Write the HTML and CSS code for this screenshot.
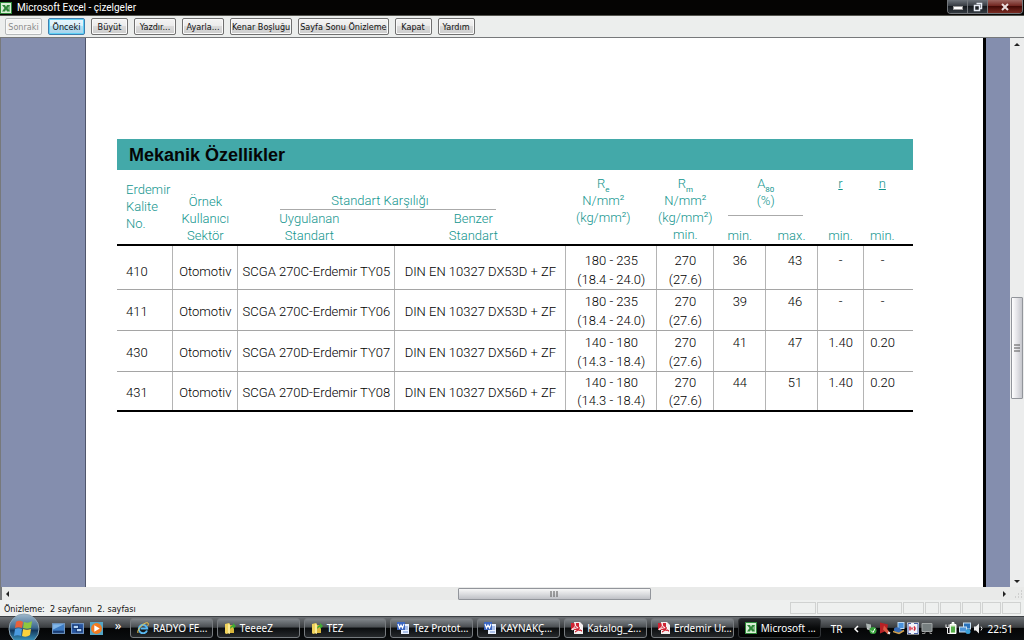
FILE: index.html
```html
<!DOCTYPE html>
<html lang="tr">
<head>
<meta charset="utf-8">
<title>Microsoft Excel - çizelgeler</title>
<link rel="stylesheet" href="styles.css">
</head>
<body>
<svg class="defs" aria-hidden="true">
  <defs>
    <linearGradient id="orb" x1="0" y1="0" x2="0" y2="1"><stop offset="0" stop-color="#9fb9cc"/><stop offset=".45" stop-color="#3f6a8f"/><stop offset=".55" stop-color="#12375d"/><stop offset="1" stop-color="#48b4dc"/></linearGradient>
    <symbol id="excel" viewBox="0 0 12 12"><rect width="12" height="12" fill="#2f8a3a"/><rect x="1" y="1" width="10" height="10" fill="#d9efd6"/><path d="M2 3h3l1 2 1-2h3L7.500 6 10 9.500H7L6 7.500 5 9.500H2L4.500 6z" fill="#2c8636"/><path d="M8 4h2M8 6h2M8 8h2" stroke="#2c8636"/></symbol>
    <symbol id="folder" viewBox="0 0 12 12"><path d="M1 2l4-1 1 1v9l-4 1-1-1z" fill="#f1d35c"/><path d="M4 3h6v8H5z" fill="#d9b63b"/><path d="M4 2l2 1v9l-2-1z" fill="#fbeb98"/><path d="M6 7c0-3 2-4 3-4V1l3 3-3 3V5c-1 0-2 1-3 2z" fill="#3faa35"/></symbol>
    <symbol id="word" viewBox="0 0 12 12"><path d="M4 2h8v10H4z" fill="#eaf1ff"/><path d="M8 5h3M8 7h3M6 10h5" stroke="#6c8ed0"/><rect width="8" height="8" fill="#3b66c0"/><path d="M1 2l1.500 4L4 3l1.500 3L7 2" fill="none" stroke="#fff" stroke-width="1.200"/></symbol>
    <symbol id="pdf" viewBox="0 0 12 12"><path d="M3 0h6l3 3v9H3z" fill="#f4eeee"/><path d="M0 1h8v7H0z" fill="#cf2333"/><path d="M1 7c3-1 4-4 3-6 0 3 2 5 6 5-3-1-6 0-9 2z" fill="none" stroke="#fff"/><path d="M4 10c2-1 4-3 4-5 0 2 1 3 3 4-2-1-5-1-7 1z" fill="none" stroke="#cf2333"/></symbol>
    <symbol id="ie" viewBox="0 0 12 12"><path d="M10 8.500A4.200 4.200 0 1 1 10.200 6.500H3.500" fill="none" stroke="#58b7f0" stroke-width="2"/><path d="M1 11C-1 8 8-1 11 1c1 1 0 2-.5 3" fill="none" stroke="#f1c545"/></symbol>
  </defs>
</svg>

<header class="titlebar">
  <svg class="app-icon"><use href="#excel"/></svg>
  <h1 class="window-title">Microsoft Excel - çizelgeler</h1>
  <div class="window-controls">
    <button class="control" aria-label="Simge durumuna küçült"><svg viewBox="0 0 12 10"><rect x="1.500" y="4.500" width="9" height="3" fill="#fff" stroke="#999"/></svg></button>
    <button class="control" aria-label="Aşağı geri getir"><svg viewBox="0 0 12 10"><path d="M4.500 1.500h5v5H8M2.500 3.500h5v5h-5z" fill="none" stroke="#e8edf5" stroke-width="1.500"/></svg></button>
    <button class="control control-close" aria-label="Pencereyi kapat"><svg viewBox="0 0 12 10"><path d="M3 2l6 6M9 2L3 8" stroke="#e9dede" stroke-width="2"/></svg></button>
  </div>
</header>

<nav class="toolbar">
  <button class="tool" disabled>Sonraki</button>
  <button class="tool tool-active">Önceki</button>
  <button class="tool">Büyüt</button>
  <button class="tool tool-wide">Yazdır...</button>
  <button class="tool tool-wide">Ayarla...</button>
  <button class="tool">Kenar Boşluğu</button>
  <button class="tool">Sayfa Sonu Önizleme</button>
  <button class="tool">Kapat</button>
  <button class="tool">Yardım</button>
</nav>

<div class="workspace">
  <main class="preview">
    <section class="sheet">
      <h2 class="banner">Mekanik Özellikler</h2>
      <table class="props">
        <colgroup>
          <col class="c-grade"><col class="c-sector"><col class="c-applied"><col class="c-similar"><col class="c-yield"><col class="c-tensile"><col class="c-elong"><col class="c-elong"><col class="c-r"><col class="c-n">
        </colgroup>
        <thead>
          <tr class="head-main">
            <th rowspan="3" class="h-grade">Erdemir<br>Kalite<br>No.</th>
            <th rowspan="3" class="h-low">Örnek<br>Kullanıcı<br>Sektör</th>
            <th colspan="2" class="h-low h-std"><span class="std-rule">Standart Karşılığı</span></th>
            <th rowspan="3" class="h-top h-yield">R<sub>e</sub><br>N/mm<sup>2</sup><br>(kg/mm<sup>2</sup>)</th>
            <th rowspan="3" class="h-top">R<sub>m</sub><br>N/mm<sup>2</sup><br>(kg/mm<sup>2</sup>)<br>min.</th>
            <th colspan="2" rowspan="2" class="h-top"><span class="elong-rule">A<sub>80</sub><br>(%)</span></th>
            <th rowspan="2" class="h-top"><u>r</u></th>
            <th rowspan="2" class="h-top h-n"><u>n</u></th>
          </tr>
          <tr class="head-line">
            <th rowspan="2" class="h-low h-pair">Uygulanan<br>Standart</th>
            <th rowspan="2" class="h-low h-pair">Benzer<br>Standart</th>
          </tr>
          <tr class="head-line">
            <th class="h-low">min.</th>
            <th class="h-low">max.</th>
            <th class="h-low">min.</th>
            <th class="h-low h-n">min.</th>
          </tr>
        </thead>
        <tbody>
          <tr><td class="grade">410</td><td>Otomotiv</td><td>SCGA 270C-Erdemir TY05</td><td>DIN EN 10327 DX53D + ZF</td><td>180 - 235<br>(18.4 - 24.0)</td><td>270<br>(27.6)</td><td class="top">36</td><td class="top max">43</td><td class="top">-</td><td class="top h-n">-</td></tr>
          <tr><td class="grade">411</td><td>Otomotiv</td><td>SCGA 270C-Erdemir TY06</td><td>DIN EN 10327 DX53D + ZF</td><td>180 - 235<br>(18.4 - 24.0)</td><td>270<br>(27.6)</td><td class="top">39</td><td class="top max">46</td><td class="top">-</td><td class="top h-n">-</td></tr>
          <tr><td class="grade">430</td><td>Otomotiv</td><td>SCGA 270D-Erdemir TY07</td><td>DIN EN 10327 DX56D + ZF</td><td>140 - 180<br>(14.3 - 18.4)</td><td>270<br>(27.6)</td><td class="top">41</td><td class="top max">47</td><td class="top">1.40</td><td class="top h-n">0.20</td></tr>
          <tr><td class="grade">431</td><td>Otomotiv</td><td>SCGA 270D-Erdemir TY08</td><td>DIN EN 10327 DX56D + ZF</td><td>140 - 180<br>(14.3 - 18.4)</td><td>270<br>(27.6)</td><td class="top">44</td><td class="top max">51</td><td class="top">1.40</td><td class="top h-n">0.20</td></tr>
        </tbody>
      </table>
    </section>
  </main>
  <div class="vscroll">
    <svg class="arrow" viewBox="0 0 12 12"><path d="M3 8l3-3 3 3z" fill="#222"/></svg>
    <div class="vtrack-before"></div>
    <div class="vthumb"><svg viewBox="0 0 6 8"><path d="M0 1h6M0 4h6M0 7h6" stroke="#555"/></svg></div>
    <div class="vtrack-after"></div>
    <svg class="arrow" viewBox="0 0 12 12"><path d="M3 5l3 3 3-3z" fill="#222"/></svg>
  </div>
</div>

<div class="hscroll">
  <svg class="arrow" viewBox="0 0 12 12"><path d="M7 3L4 6l3 3z" fill="#222"/></svg>
  <div class="htrack-before"></div>
  <div class="hthumb"><svg viewBox="0 0 8 6"><path d="M1 0v6M4 0v6M7 0v6" stroke="#555"/></svg></div>
  <div class="htrack-after"></div>
  <svg class="arrow" viewBox="0 0 12 12"><path d="M5 3l3 3-3 3z" fill="#222"/></svg>
  <svg class="grip" viewBox="0 0 12 12"><path d="M10 3h1M7 6h1M10 6h1M4 9h1M7 9h1M10 9h1" stroke="#b5b5b5"/></svg>
</div>

<div class="statusbar">
  <p class="status-text">Önizleme:&nbsp; 2 sayfanın&nbsp; 2. sayfası</p>
  <div class="panes"><span class="pane w27"></span><span class="pane w85"></span><span class="pane w22"></span><span class="pane w15"></span><span class="pane w22"></span><span class="pane w20"></span><span class="pane w20"></span><span class="pane w20"></span></div>
</div>

<footer class="taskbar">
  <button class="start" aria-label="Başlat"><svg viewBox="0 0 32 32"><circle cx="16" cy="16" r="15" fill="url(#orb)" stroke="#8fa6b5"/><path d="M8 9c3-2 5-1 7 0l-1 6c-2-1-5-1-7 0z" fill="#e8613b"/><path d="M16 9c3 1 5 1 8-1l-1 7c-3 1-5 1-8 0z" fill="#8fc73e"/><path d="M7 16c2-1 5-1 7 0l-1 7c-2-1-5-1-7 0z" fill="#4a9be0"/><path d="M15 16c3 1 5 1 8 0l-1 6c-3 2-5 2-8 1z" fill="#fbd23c"/></svg></button>
  <div class="quick">
    <button class="launch" aria-label="Masaüstünü göster"><svg viewBox="0 0 12 12"><rect x=".5" y="1.500" width="11" height="9" fill="#3d7cc4" stroke="#6f94bd"/><path d="M1 8h10v2H1z" fill="#193a70"/><path d="M1 2h10L1 7z" fill="#83b7e8"/></svg></button>
    <button class="launch" aria-label="Pencereler arasında geçiş yap"><svg viewBox="0 0 12 12"><rect x=".5" y="1.500" width="11" height="9" fill="#26539d" stroke="#7599c7"/><path d="M2 3h5v3H2zM5 6h5v3H5z" fill="#bad7f5" stroke="#173973"/></svg></button>
    <button class="launch" aria-label="Media Player"><svg viewBox="0 0 12 12"><rect width="12" height="12" fill="#53a5c6"/><circle cx="6" cy="6" r="5" fill="#f17b21"/><path d="M4 3l5 3-5 3z" fill="#fff"/></svg></button>
  </div>
  <span class="more">»</span>
  <div class="tasks">
    <button class="task"><svg><use href="#ie"/></svg>RADYO FE...</button>
    <button class="task"><svg><use href="#folder"/></svg>TeeeeZ</button>
    <button class="task"><svg><use href="#folder"/></svg>TEZ</button>
    <button class="task"><svg><use href="#word"/></svg>Tez Protot...</button>
    <button class="task"><svg><use href="#word"/></svg>KAYNAKÇ...</button>
    <button class="task"><svg><use href="#pdf"/></svg>Katalog_2...</button>
    <button class="task"><svg><use href="#pdf"/></svg>Erdemir Ur...</button>
    <button class="task task-active"><svg><use href="#excel"/></svg>Microsoft ...</button>
  </div>
  <div class="tray">
    <span class="lang">TR</span>
    <svg class="chevron" viewBox="0 0 6 10"><path d="M5 2L2 5l3 3" fill="none" stroke="#fff" stroke-width="1.500"/></svg>
    <svg viewBox="0 0 12 12"><path d="M1 1l5 1v4L2 7z" fill="#adb6b4"/><path d="M2 6l4 2" stroke="#ddd"/><circle cx="8" cy="8" r="3.500" fill="#36a43b"/><path d="M6 8l2 2 2-4" fill="none" stroke="#fff"/></svg>
    <svg viewBox="0 0 12 12"><path d="M1 0l8 2-1 6-7 3z" fill="#b82025"/><path d="M5 3l6 7-2 2-5-5z" fill="#d95a43"/><path d="M9 10l2 1" stroke="#eee" stroke-width="2"/></svg>
    <svg viewBox="0 0 12 12"><rect x="5" y="0" width="6" height="6" fill="#4b92dd" stroke="#bdd9f2"/><path d="M1 6c3-3 6 0 9 2l-3 3c-3 0-5-1-6-3z" fill="#386bb3"/><path d="M0 9l6 2 5-3" fill="none" stroke="#d3a14b" stroke-width="1.500"/></svg>
    <svg viewBox="0 0 12 12"><rect width="12" height="12" fill="#f1f3fb"/><path d="M4 1H1v10h3M7 1h4v10H7" fill="none" stroke="#4761a7"/><path d="M3 4v4M5 5v2M7 4q2 2 0 4" fill="none" stroke="#d52a3b" stroke-width="1.500"/></svg>
    <svg viewBox="0 0 12 12"><path d="M1 1h10v8H1z" fill="#777f80" stroke="#a2a7a7"/><path d="M4 9v2H1M9 9v2h2" fill="none" stroke="#888"/></svg>
    <svg class="apart" viewBox="0 0 12 12"><path d="M5 2h6v9H5zM7 0h2v2H7z" fill="#dff0d5" stroke="#fff"/><rect x="6" y="4" width="4" height="6" fill="#54ad47"/><path d="M1 2v3h3V2M2.500 5v6H5" fill="none" stroke="#eee"/></svg>
    <svg viewBox="0 0 12 12"><rect x="4.500" y=".5" width="7" height="6" fill="#2871bb" stroke="#c9e0f2"/><rect x=".5" y="4.500" width="7" height="5" fill="#4e94d8" stroke="#c9e0f2"/><circle cx="9" cy="9" r="2.500" fill="#3aa0d8"/></svg>
    <svg viewBox="0 0 12 12"><path d="M1 4h2l3-3v10L3 8H1z" fill="#eee"/><path d="M8 4q2 2 0 4" fill="none" stroke="#ddd"/></svg>
    <time class="clock">22:51</time>
  </div>
</footer>
</body>
</html>
```

FILE: styles.css
```css
* { box-sizing: border-box; }
body {
  margin: 0;
  min-height: 100vh;
  display: flex;
  flex-direction: column;
  background: #eceeec;
  font-family: "DejaVu Sans Condensed", "DejaVu Sans", sans-serif;
  font-size: 9px;
  color: #111;
}
button { font: inherit; color: inherit; padding: 0; }
svg { display: block; flex: none; }
.defs { position: absolute; width: 0; height: 0; }

.titlebar {
  display: flex;
  align-items: center;
  gap: 5px;
  height: 16px;
  background: #050403;
  border-bottom: 1px solid #55554f;
}
.app-icon { width: 12px; height: 12px; }
.window-title {
  margin: 0;
  flex: 1;
  font: 400 10px/14px Roboto, "Noto Sans", sans-serif;
  color: #fff;
}
.window-controls {
  display: flex;
  align-self: flex-start;
  height: 14px;
  margin-right: 1px;
  border: 1px solid #74787c;
  border-top: 0;
  border-radius: 0 0 4px 4px;
  overflow: hidden;
}
.control {
  width: 20px;
  display: flex;
  align-items: center;
  justify-content: center;
  border: 0;
  border-right: 1px solid #74787c;
  background: linear-gradient(#6c7279, #30353b 50%, #14181c 50%, #343b42);
}
.control svg { width: 12px; height: 10px; }
.control-close {
  width: 34px;
  border-right: 0;
  background: linear-gradient(#9c6560, #6d1e18 50%, #430a06 50%, #7b2b22);
}

.toolbar {
  display: flex;
  flex-wrap: wrap;
  gap: 6px;
  padding: 2px 5px;
  background: #eceeed;
  border-bottom: 1px solid #77797b;
}
.tool {
  height: 17px;
  min-width: 37px;
  padding: 0 1px;
  border: 1px solid #707070;
  border-radius: 2px;
  background: linear-gradient(#f4f4f4, #ebebeb 50%, #dadada 50%, #cdcdcd);
  box-shadow: inset 0 0 0 1px #fafafa;
}
.tool-wide { min-width: 42px; }
.tool:disabled { color: #8b8b8b; border-color: #b5b9ba; background: #f2f3f2; }
.tool-active {
  border-color: #3c7fb1;
  background: linear-gradient(#e8f5fc, #d7effa 50%, #b9def1 50%, #a5d3ec);
  box-shadow: inset 0 0 0 1px #5fd0f5;
}

.workspace { flex: 1; display: flex; }
.preview {
  flex: 1;
  display: flex;
  padding: 0 24px 0 84px;
  border-left: 1px solid #77797b;
  background: #848eae;
}
.sheet {
  flex: 1;
  padding: 101px 70px 32px 31px;
  background: #fff;
  border-left: 1px solid #50566c;
  border-right: 3px solid #000;
}
.banner {
  margin: 0;
  padding: 1px 12px 0;
  background: #43a9a9;
  color: #050505;
  font: bold 18px/30px "Liberation Sans", Arial, sans-serif;
}
.props {
  width: 100%;
  table-layout: fixed;
  border-collapse: collapse;
  font: 300 13px/19px Roboto, "Liberation Sans", sans-serif;
  color: #000;
  text-align: center;
  white-space: nowrap;
  border-bottom: 2px solid #000;
}
.c-grade { width: 7%; }
.c-sector { width: 8.2%; }
.c-applied { width: 19.7%; }
.c-similar { width: 21.5%; }
.c-yield { width: 11.4%; }
.c-tensile { width: 7.2%; }
.c-elong { width: 6.5%; }
.c-r { width: 5.8%; }
.c-n { width: 6.2%; }
.props th {
  padding: 0;
  font-weight: 300;
  line-height: 17px;
  color: #12958e;
}
.props thead { border-bottom: 2px solid #000; }
.head-main { height: 40px; }
.head-line { height: 17px; }
.props .h-grade { padding: 11px 0 0 9px; text-align: left; vertical-align: top; }
.props .h-low { vertical-align: bottom; }
.props .h-top { padding-top: 5px; vertical-align: top; }
.props .h-yield { padding-right: 16px; }
.props .h-pair { padding-right: 14px; }
.props .h-n { padding-right: 12px; }
.props .h-std { padding-right: 28px; }
.std-rule {
  display: block;
  width: 72%;
  margin: 0 auto;
  padding-right: 16px;
  border-bottom: 1px solid #aaa;
}
.elong-rule {
  display: block;
  width: 72%;
  margin: 0 auto;
  padding-bottom: 6px;
  border-bottom: 1px solid #aaa;
}
.props sub, .props sup { font-size: 8px; font-weight: 400; line-height: 0; }
.props td {
  padding: 2px 0 0;
  border: 1px solid #b4b4b4;
  border-bottom-color: #a5a5a5;
}
.props td:first-child { border-left: 0; }
.props td:last-child { border-right: 0; }
.props tbody td:nth-child(-n+4) { padding-top: 3px; }
.props tbody tr:first-child td { padding-top: 5px; border-top: 0; }
.props tbody tr:first-child td:nth-child(-n+4) { padding-top: 8px; }
.props tbody tr:last-child td { line-height: 18px; border-bottom: 0; }
.props .grade { padding-left: 9px; text-align: left; }
.props .top { vertical-align: top; }
.props .max { padding-left: 7px; }

.arrow { width: 12px; height: 12px; }
.vscroll {
  width: 14px;
  display: flex;
  flex-direction: column;
  align-items: center;
  background: #eceded;
}
.vtrack-before { flex: 248; }
.vthumb {
  flex: 100;
  width: 12px;
  display: flex;
  align-items: center;
  justify-content: center;
  border: 1px solid #92959b;
  border-radius: 1px;
  background: linear-gradient(90deg, #fff, #e4e4e8 50%, #c5c6cc);
}
.vthumb svg { width: 6px; height: 8px; }
.vtrack-after { flex: 177; }

.hscroll {
  display: flex;
  align-items: center;
  height: 13px;
  border-left: 2px solid #77797b;
  background: #e9eae9;
}
.htrack-before { flex: 445; }
.hthumb {
  flex: 191;
  height: 12px;
  display: flex;
  align-items: center;
  justify-content: center;
  border: 1px solid #92959b;
  border-radius: 1px;
  background: linear-gradient(#f7f7f7, #dcdde0 50%, #bfc1c6);
}
.hthumb svg { width: 8px; height: 6px; }
.htrack-after { flex: 348; }
.grip { width: 14px; height: 12px; }

.statusbar {
  display: flex;
  align-items: center;
  justify-content: space-between;
  height: 16px;
  padding: 0 2px 0 4px;
  background: #eef0ef;
}
.status-text { margin: 0; padding-top: 2px; }
.panes { display: flex; align-self: stretch; padding: 2px 0; }
.pane { border: 1px solid #d0d2d1; margin-right: 1px; }
.w27 { width: 26px; }
.w85 { width: 85px; }
.w22 { width: 21px; }
.w15 { width: 14px; }
.w20 { width: 19px; }

.taskbar {
  display: flex;
  align-items: center;
  height: 24px;
  padding: 0 11px 0 8px;
  border-top: 1px solid #3c4044;
  background: linear-gradient(#6d7175, #3a3d40 45%, #040506 50%, #0b0d0f);
  color: #fff;
  font: 10px/14px "Noto Sans", sans-serif;
}
.start { width: 32px; height: 32px; border: 0; background: none; margin: -4px 0; z-index: 1; }
.start svg { width: 32px; height: 32px; }
.quick { display: flex; gap: 6px; margin-left: 12px; }
.launch { border: 0; background: none; }
.launch svg { width: 13px; height: 13px; }
.more { width: 27px; padding: 0 0 8px 3px; text-align: center; font-size: 13px; }
.tasks { flex: 1; display: flex; gap: 4px; align-self: stretch; padding: 1px 0 2px; }
.task {
  flex: 1;
  min-width: 0;
  display: flex;
  align-items: center;
  gap: 4px;
  padding: 0 6px;
  overflow: hidden;
  white-space: nowrap;
  border: 1px solid #777b7f;
  border-radius: 3px;
  background: linear-gradient(#80858a, #4a4e52 45%, #0b0d0f 50%, #25282b);
}
.task svg { width: 12px; height: 12px; }
.task-active { border-color: #303336; background: linear-gradient(#25272a, #08090a 50%, #000); }
.tray { display: flex; align-items: center; gap: 2px; margin-left: 10px; }
.tray svg { width: 12px; height: 13px; }
.tray .chevron { width: 6px; height: 10px; margin: 0 4px 0 9px; }
.tray .apart { margin-left: 10px; }
```
